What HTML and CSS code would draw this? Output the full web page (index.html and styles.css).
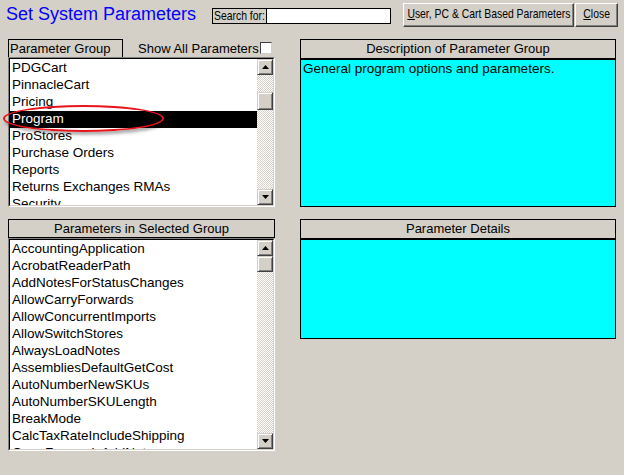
FILE: index.html
```html
<!DOCTYPE html>
<html lang="en">
<head>
    <meta charset="UTF-8">
    <meta name="viewport" content="width=device-width, initial-scale=1.0">
    <title>Set System Parameters</title>
    <link rel="stylesheet" href="styles.css">
</head>
<body>
    <div class="window">
        <div class="topbar">
            <h1 class="title">Set System Parameters</h1>
            <div class="search">
                <label class="search-label" for="search"><span class="narrow">Search for:</span></label>
                <input class="search-input" id="search" type="text">
            </div>
            <button class="btn btn-wide"><span class="narrow"><u>U</u>ser, PC &amp; Cart Based Parameters</span></button>
            <button class="btn btn-close"><span class="narrow"><u>C</u>lose</span></button>
        </div>

        <div class="panels">
            <section class="panel">
                <div class="group-head">
                    <div class="head-tab">Parameter Group</div>
                    <label class="show-all">Show All Parameters<span class="checkbox"></span></label>
                </div>
                <div class="listbox listbox-groups">
                    <div class="listbox-inner">
                        <ul class="list-items">
                            <li>PDGCart</li>
                            <li>PinnacleCart</li>
                            <li>Pricing</li>
                            <li class="selected">Program</li>
                            <li>ProStores</li>
                            <li>Purchase Orders</li>
                            <li>Reports</li>
                            <li>Returns Exchanges RMAs</li>
                            <li>Security</li>
                        </ul>
                        <div class="scrollbar">
                            <div class="scroll-btn">
                                <svg width="7" height="4" viewBox="0 0 7 4"><polygon points="3.5,0 7,4 0,4"/></svg>
                            </div>
                            <div class="scroll-track">
                                <div class="scroll-thumb thumb-groups"></div>
                            </div>
                            <div class="scroll-btn">
                                <svg width="7" height="4" viewBox="0 0 7 4"><polygon points="0,0 7,0 3.5,4"/></svg>
                            </div>
                        </div>
                    </div>
                </div>
            </section>

            <section class="panel">
                <div class="info-head">Description of Parameter Group</div>
                <div class="info-body info-desc">General program options and parameters.</div>
            </section>

            <section class="panel">
                <div class="list-head">Parameters in Selected Group</div>
                <div class="listbox listbox-params">
                    <div class="listbox-inner">
                        <ul class="list-items">
                            <li>AccountingApplication</li>
                            <li>AcrobatReaderPath</li>
                            <li>AddNotesForStatusChanges</li>
                            <li>AllowCarryForwards</li>
                            <li>AllowConcurrentImports</li>
                            <li>AllowSwitchStores</li>
                            <li>AlwaysLoadNotes</li>
                            <li>AssembliesDefaultGetCost</li>
                            <li>AutoNumberNewSKUs</li>
                            <li>AutoNumberSKULength</li>
                            <li>BreakMode</li>
                            <li>CalcTaxRateIncludeShipping</li>
                            <li>CarryForwardsAddNotes</li>
                        </ul>
                        <div class="scrollbar">
                            <div class="scroll-btn">
                                <svg width="7" height="4" viewBox="0 0 7 4"><polygon points="3.5,0 7,4 0,4"/></svg>
                            </div>
                            <div class="scroll-track">
                                <div class="scroll-thumb thumb-params"></div>
                            </div>
                            <div class="scroll-btn">
                                <svg width="7" height="4" viewBox="0 0 7 4"><polygon points="0,0 7,0 3.5,4"/></svg>
                            </div>
                        </div>
                    </div>
                </div>
            </section>

            <section class="panel">
                <div class="info-head">Parameter Details</div>
                <div class="info-body info-details"></div>
            </section>
        </div>

        <div class="highlight-ring"></div>
    </div>
</body>
</html>
```

FILE: styles.css
```css
body {
    margin: 0;
    background-color: #d4d0c8;
    font-family: "Liberation Sans", Arial, sans-serif;
    color: #000;
}

.window {
    position: relative;
    width: 624px;
    height: 475px;
}

/* top bar */
.topbar {
    display: flex;
    align-items: flex-start;
    height: 39px;
    padding-left: 6px;
    box-sizing: border-box;
}

.title {
    width: 206px;
    margin: 0;
    padding-top: 3px;
    font-size: 18px;
    font-weight: normal;
    line-height: 22px;
    color: #0000ff;
    white-space: nowrap;
}

/* the dialog font is a narrow one */
.narrow {
    display: inline-block;
    transform: scaleX(0.8);
    white-space: nowrap;
}

.search {
    display: flex;
    margin-top: 8px;
}

.search-label {
    width: 55px;
    height: 16px;
    box-sizing: border-box;
    border: 1px solid #000;
    padding-left: 1px;
    font-size: 13px;
    line-height: 14px;
    white-space: nowrap;
}

.search-label .narrow {
    transform-origin: left center;
}

.search-input {
    width: 124px;
    height: 16px;
    box-sizing: border-box;
    margin: 0;
    padding: 0 2px;
    border: 1px solid #000;
    border-left: none;
    background-color: #fff;
    font-size: 13px;
}

.btn {
    display: flex;
    justify-content: center;
    height: 24px;
    margin-top: 3px;
    padding: 1px 0 3px;
    box-sizing: border-box;
    background-color: #d4d0c8;
    border: 1px solid;
    border-color: #fff #404040 #404040 #fff;
    box-shadow: inset -1px -1px #808080;
    font-family: "Liberation Sans", Arial, sans-serif;
    font-size: 13px;
    line-height: 18px;
    color: #000;
}

.btn-wide {
    width: 171px;
    margin-left: 12px;
}

.btn-close {
    width: 43px;
    margin-left: 1px;
}

/* panels */
.panels {
    display: grid;
    grid-template-columns: 267px 316px;
    grid-template-rows: 168px auto;
    column-gap: 25px;
    row-gap: 12px;
    padding-left: 8px;
}

.panel {
    display: flex;
    flex-direction: column;
}

.group-head {
    display: flex;
    height: 18px;
}

.head-tab {
    width: 115px;
    box-sizing: border-box;
    border: 1px solid #000;
    border-bottom: none;
    padding-left: 1px;
    font-size: 13px;
    line-height: 17px;
}

.show-all {
    display: flex;
    align-items: flex-start;
    margin-left: 15px;
    padding-top: 1px;
    font-size: 13px;
    line-height: 17px;
    white-space: nowrap;
}

.checkbox {
    width: 12px;
    height: 12px;
    margin-top: 2px;
    margin-left: 1px;
    box-sizing: border-box;
    background-color: #fff;
    border: 1px solid;
    border-color: #404040 #d4d0c8 #d4d0c8 #404040;
}

.list-head {
    height: 19px;
    box-sizing: border-box;
    border: 1px solid #000;
    text-align: center;
    font-size: 13px;
    line-height: 17px;
}

.listbox {
    box-sizing: border-box;
    border: 1px solid;
    border-color: #808080 #fff #fff #808080;
}

.listbox-groups {
    height: 150px;
}

.listbox-params {
    height: 213px;
}

.listbox-inner {
    display: flex;
    height: 100%;
    box-sizing: border-box;
    border: 1px solid;
    border-color: #000 #d4d0c8 #d4d0c8 #000;
    background-color: #fff;
}

.list-items {
    flex: 1;
    margin: 0;
    padding: 1px 0 0;
    list-style: none;
    overflow: hidden;
}

.list-items li {
    height: 17px;
    box-sizing: border-box;
    padding: 0 0 2px 2px;
    font-size: 13.5px;
    line-height: 15px;
    white-space: nowrap;
}

.list-items li.selected {
    background-color: #000;
    color: #fff;
}

.scrollbar {
    display: flex;
    flex-direction: column;
    flex-shrink: 0;
    width: 16px;
    background: repeating-conic-gradient(#fff 0 25%, #d4d0c8 0 50%) 0 0 / 2px 2px;
}

.scroll-btn,
.scroll-thumb {
    box-sizing: border-box;
    background-color: #d4d0c8;
    border: 1px solid;
    border-color: #d4d0c8 #404040 #404040 #d4d0c8;
    box-shadow: inset 1px 1px #fff, inset -1px -1px #808080;
}

.scroll-btn {
    display: flex;
    align-items: center;
    justify-content: center;
    height: 16px;
}

.scroll-btn svg {
    display: block;
}

.scroll-track {
    flex: 1;
}

.thumb-groups {
    height: 18px;
    margin-top: 17px;
}

.thumb-params {
    height: 16px;
}

.info-head {
    height: 19px;
    box-sizing: border-box;
    border: 1px solid #000;
    border-bottom: none;
    text-align: center;
    font-size: 13px;
    line-height: 18px;
}

.info-body {
    box-sizing: border-box;
    border: 1px solid #000;
    border-top-width: 2px;
    background-color: #00ffff;
    padding: 0 2px;
    font-size: 13.5px;
    line-height: 17px;
}

.info-desc {
    height: 149px;
}

.info-details {
    height: 101px;
}

/* annotation drawn over the list */
.highlight-ring {
    position: absolute;
    left: 3px;
    top: 105px;
    width: 161px;
    height: 27px;
    box-sizing: border-box;
    border: 2px solid #e8141b;
    border-radius: 50%;
    box-shadow: 2px 3px 3px rgba(0, 0, 0, 0.3);
}
```
